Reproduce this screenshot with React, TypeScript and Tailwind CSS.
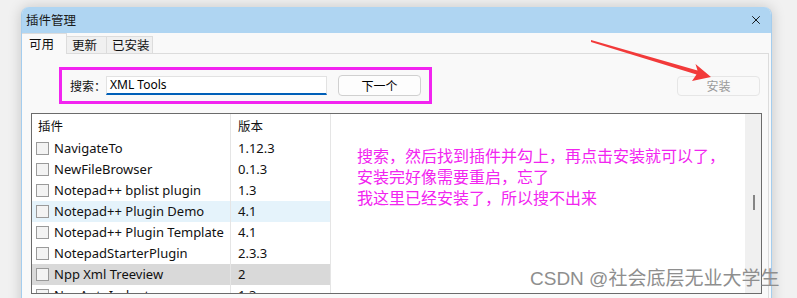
import { X } from 'lucide-react';

const rows = [
  { name: 'NavigateTo', ver: '1.12.3', bg: '' },
  { name: 'NewFileBrowser', ver: '0.1.3', bg: '' },
  { name: 'Notepad++ bplist plugin', ver: '1.3', bg: '' },
  { name: 'Notepad++ Plugin Demo', ver: '4.1', bg: 'bg-[#e5f3fb]' },
  { name: 'Notepad++ Plugin Template', ver: '4.1', bg: '' },
  { name: 'NotepadStarterPlugin', ver: '2.3.3', bg: '' },
  { name: 'Npp Xml Treeview', ver: '2', bg: 'bg-[#d9d9d9]' },
  { name: 'NppAutoIndent', ver: '1.3', bg: '' },
];

const ui = { fontFamily: '"Segoe UI", "Noto Sans", "Noto Sans CJK SC", sans-serif' };
const cjk = { fontFamily: '"Noto Sans CJK SC", sans-serif' };

export default function App() {
  return (
    <div className="relative w-[797px] h-[298px] overflow-hidden bg-[#f1f1f1] pl-[21px] pt-[7px]" style={ui}>
      <div className="w-[751px] h-[310px] rounded-t-[8px] overflow-hidden border-x border-[#a4cdee] bg-[#f9f9f9] shadow-[0_0_14px_rgba(0,0,0,0.18)]">
        {/* title bar */}
        <div className="h-[26px] bg-[#afd5f2] flex items-center justify-between pl-[4px] pr-[8px]">
          <span className="text-[12.5px] text-[#1a1a1a]" style={cjk}>插件管理</span>
          <X className="w-[14px] h-[14px] text-black" strokeWidth={1.5} />
        </div>

        {/* tabs */}
        <div className="flex items-end h-[20px] text-[12.5px] text-[#111]" style={cjk}>
          <div className="w-[45px] h-[21px] -mb-px z-10 bg-[#f9f9f9] border-t border-r border-[#dcdcdc] pl-[7px] flex items-center">可用</div>
          <div className="w-[40px] h-[17px] bg-[#f0f0f0] border-t border-r border-[#dcdcdc] pl-[5px] flex items-center">更新</div>
          <div className="w-[46px] h-[17px] bg-[#f0f0f0] border-t border-r border-[#dcdcdc] pl-[5px] flex items-center">已安装</div>
        </div>

        {/* panel */}
        <div className="mr-[2px] h-[260px] border-t border-r border-[#dcdcdc] bg-[#f9f9f9]">
          <div className="flex items-center justify-between ml-[37px] mt-[13px] pr-[8px]">
            <div className="w-[373px] h-[37px] border-[3px] border-[#f224f0] flex items-center pl-[8px]">
              <span className="text-[12px] text-[#111] w-[36px]" style={cjk}>搜索：</span>
              <div className="w-[221px] h-[19px] bg-white border border-[#e2e2e2] border-b-2 border-b-[#005fb8] flex items-center pl-[3px] text-[12px] text-black">
                XML Tools
              </div>
              <div className="ml-[11px] w-[83px] h-[21px] rounded-[4px] border border-[#d0d0d0] bg-[#fdfdfd] flex items-center justify-center text-[12px] text-black" style={cjk}>
                下一个
              </div>
            </div>
            <div className="w-[83px] h-[20px] rounded-[4px] border border-[#e6e6e6] bg-[#f9f9f9] flex items-center justify-center text-[12px] text-[#9a9a9a]" style={cjk}>
              安装
            </div>
          </div>

          {/* list */}
          <div className="ml-[9px] mr-[6px] mt-[9px] h-[181px] border border-[#6b6b6b] bg-white flex overflow-hidden">
            <div className="relative flex-1">
              <div className="flex h-[24px] text-[12.5px] text-[#111]" style={cjk}>
                <div className="w-[199px] border-r border-[#e5e5e5] pl-[6px] flex items-center">插件</div>
                <div className="w-[100px] border-r border-[#e5e5e5] pl-[7px] flex items-center">版本</div>
                <div className="flex-1" />
              </div>
              {rows.map((r) => (
                <div key={r.name} className="flex h-[21px] text-[13px] text-[#111]">
                  <div className={`w-[199px] border-r border-[#e5e5e5] flex items-center pl-[4px] ${r.bg}`}>
                    <span className="w-[13px] h-[13px] border border-[#9a9a9a] bg-[#f3f3f3] mr-[5px]" />
                    <span>{r.name}</span>
                  </div>
                  <div className={`w-[100px] border-r border-[#e5e5e5] flex items-center pl-[7px] ${r.bg}`}>{r.ver}</div>
                  <div className="flex-1" />
                </div>
              ))}
              <div className="absolute left-[325px] top-[31px] text-[16px] leading-[21px] text-[#f224f0]" style={cjk}>
                <p>搜索，然后找到插件并勾上，再点击安装就可以了，</p>
                <p>安装完好像需要重启，忘了</p>
                <p>我这里已经安装了，所以搜不出来</p>
              </div>
            </div>
            <div className="w-[16px] bg-[#f0f0f0] flex justify-center pt-[81px]">
              <div className="w-[2px] h-[15px] bg-[#858585] ml-[2px]" />
            </div>
          </div>
        </div>
      </div>

      {/* annotation arrow */}
      <svg className="absolute left-0 top-0 pointer-events-none" width="797" height="298">
        <polygon points="591,40 697.5,70.5 695.5,64 711,77 692,81 696.5,74.5 591,42" fill="#f23a3a" />
      </svg>

      {/* watermark */}
      <div className="absolute left-[530px] top-[266px] text-[19px] leading-[26px] text-[#8e8e8e] whitespace-nowrap" style={{ fontFamily: '"Liberation Sans", "Noto Sans CJK SC", sans-serif' }}>
        CSDN @社会底层无业大学生
      </div>
    </div>
  );
}
